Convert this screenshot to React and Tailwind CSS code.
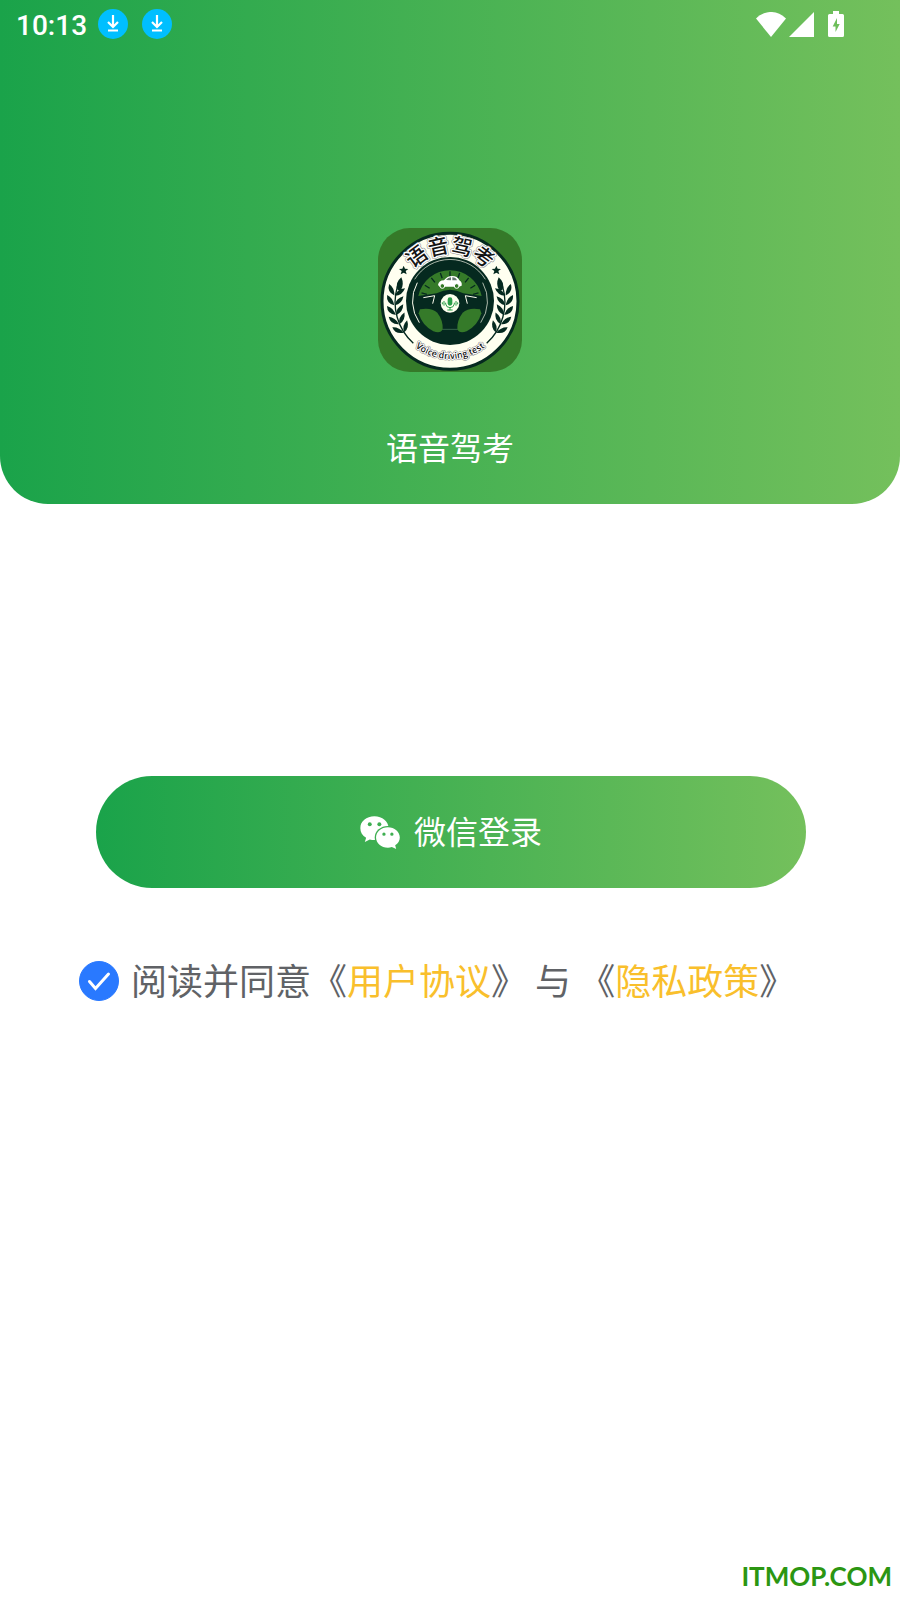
const DownloadBadge = () => (
  <svg viewBox="0 0 30 30" className="size-[30px]" aria-hidden="true">
    <circle cx="15" cy="15" r="15" fill="#00bfff" />
    <path d="M15 6v12M10 13l5 5 5-5M10 21.5h10" fill="none" stroke="#fff" strokeWidth="2.2" />
  </svg>
)

const WifiIcon = () => (
  <svg viewBox="0 0 30 25" className="h-[25px] w-[30px]" fill="#fff" aria-hidden="true">
    <path d="M0 6.5C9-2.200 21-2.200 30 6.500L15 25Z" />
  </svg>
)

const SignalIcon = () => (
  <svg viewBox="0 0 25 25" className="size-[25px]" fill="#fff" aria-hidden="true">
    <path d="M25 0v25H0Z" />
  </svg>
)

const BatteryIcon = () => (
  <svg viewBox="0 0 16 26" className="h-[26px] w-4" aria-hidden="true">
    <path
      fill="#fff"
      fillRule="evenodd"
      d="M5 0h6v3h3.500Q16 3 16 4.500v20Q16 26 14.500 26h-13Q0 26 0 24.500v-20Q0 3 1.500 3H5ZM9 7l-4.300 8.500h2.800V21l4.200-8H9Z"
    />
  </svg>
)

const WechatIcon = () => (
  <svg viewBox="0 0 120 100" className="h-[33px] w-10" aria-hidden="true">
    <mask id="bubble-gap">
      <rect width="120" height="100" fill="#fff" />
      <ellipse cx="84" cy="65" rx="40" ry="35" fill="#000" />
      <circle cx="29" cy="25" r="6" fill="#000" />
      <circle cx="58" cy="25" r="6" fill="#000" />
    </mask>
    <path
      mask="url(#bubble-gap)"
      fill="#fff"
      d="M43 1C19 1 0 17 0 37c0 12 7 22 18 29l-4 13 15-8c5 1 9 2 14 2 24 0 43-16 43-36S67 1 43 1Z"
    />
    <path
      fill="#fff"
      fillRule="evenodd"
      d="M84 34c-20 0-36 14-36 31s16 31 36 31c4 0 8-1 12-2l13 6-3-11c9-6 14-14 14-24 0-17-16-31-36-31ZM72 50a5 5 0 1 1 0 10 5 5 0 0 1 0-10Zm24 0a5 5 0 1 1 0 10 5 5 0 0 1 0-10Z"
    />
  </svg>
)

const LEAF_ANGLES = [11, 1, -9, -19, -29]
const RAY_ANGLES = [-74, -58, -39, -19, 0, 19, 39, 58, 74]

// One branch, drawn on the left of the badge around its centre
function Laurel() {
  return (
    <g fill="#05291f">
      <path d="M-158 -44A166 166 0 0 0 -110 126" fill="none" stroke="#05291f" strokeWidth="4" />
      <path d="M-157 -34q-10-20 11-38q9 20-1 38Z" />
      {LEAF_ANGLES.map((angle) => (
        <g key={angle} transform={`rotate(${angle}) translate(-166 4)`}>
          <path d="M-1 11Q-26 4-23-20Q-5-12-1 11Z" />
          <path d="M1 11Q2-10 26-17Q22 6 1 11Z" />
        </g>
      ))}
    </g>
  )
}

function AppLogo() {
  return (
    <svg
      viewBox="0 0 432 432"
      className="size-36 rounded-[32px] bg-[#357a29]"
      role="img"
      aria-label="语音驾考"
    >
      <defs>
        <path id="arc-top" d="M71 220A145 145 0 0 1 361 220" />
        <path id="arc-bottom" d="M44 221A172 172 0 0 0 388 221" />
      </defs>
      <circle cx="216" cy="220" r="204" fill="#fffff0" stroke="#05291f" strokeWidth="9" />

      {/* Wheel */}
      <circle cx="216" cy="219" r="132" fill="#05291f" />
      <path d="M124 284A113 113 0 0 1 118 164" fill="none" stroke="#fffff0" strokeWidth="3" />
      <path d="M110 154A124 124 0 0 1 322 154" fill="none" stroke="#fffff0" strokeWidth="2" />
      <path d="M314 164A113 113 0 0 1 308 284" fill="none" stroke="#fffff0" strokeWidth="2" />
      <path
        fill="#357a29"
        d="M121 204A97 97 0 0 1 311 204L256 196Q216 174 176 196Z"
      />
      <path
        fill="#357a29"
        d="M126 244Q160 238 178 254Q196 278 194 304Q188 318 166 310Q132 292 122 256Z"
      />
      <path
        fill="#357a29"
        d="M306 244Q272 238 254 254Q236 278 238 304Q244 318 266 310Q300 292 310 256Z"
      />
      <path d="M136 209l34-6-6 24M296 209l-34-6 6 24" fill="none" stroke="#fffff0" strokeWidth="3" />
      <path d="M194 304h44" stroke="#4f8460" strokeWidth="2" />
      <g transform="translate(216 219)" stroke="#05291f" strokeWidth="4">
        {RAY_ANGLES.map((angle) => (
          <path key={angle} d="M0-72V-89" transform={`rotate(${angle})`} />
        ))}
      </g>

      {/* Car */}
      <path
        fill="#fff"
        d="M180 171q2-14 18-14q10-13 24-13q17 0 22 13q9 5 7 16l-8 3h-58Z"
      />
      <path d="M204 156q6-8 15-8v9ZM223 148q11 0 14 9h-14Z" fill="#63766d" />
      <circle cx="193" cy="174" r="7" fill="#357a29" stroke="#fff" strokeWidth="3" />
      <circle cx="236" cy="174" r="7" fill="#357a29" stroke="#fff" strokeWidth="3" />

      {/* Microphone */}
      <circle cx="216" cy="226" r="28" fill="#fffff0" />
      <rect x="209" y="208" width="14" height="25" rx="7" fill="#2a9e47" />
      <path
        d="M203 224v4q2 11 13 11t13-11v-4M216 239v7M208 246h16M198 219v14M193 223v6M234 219v14M239 223v6"
        fill="none"
        stroke="#2a9e47"
        strokeWidth="3"
      />

      <g transform="translate(216 220)">
        <Laurel />
        <g transform="scale(-1 1)">
          <Laurel />
        </g>
      </g>

      <path d="M77 113l4 9 10 1-8 6 3 10-9-5-9 5 3-10-8-6 10-1Z" fill="#05291f" />
      <path d="M355 113l4 9 10 1-8 6 3 10-9-5-9 5 3-10-8-6 10-1Z" fill="#05291f" />

      <g fill="#151515" textAnchor="middle">
        <g
          strokeLinejoin="round"
          className="font-['Noto_Sans_CJK_SC',sans-serif] text-[62px] font-medium"
        >
          <text stroke="#8b8b8b" strokeWidth="11">
            <textPath href="#arc-top" startOffset="50%">语音驾考</textPath>
          </text>
          <text stroke="#fff" strokeWidth="8" className="[paint-order:stroke]">
            <textPath href="#arc-top" startOffset="50%">语音驾考</textPath>
          </text>
        </g>
        <g
          strokeLinejoin="round"
          className="font-['Open_Sans',sans-serif] text-[27px] font-semibold"
        >
          <text stroke="#8b8b8b" strokeWidth="9">
            <textPath href="#arc-bottom" startOffset="50%">Voice driving test</textPath>
          </text>
          <text stroke="#fff" strokeWidth="6" className="[paint-order:stroke]">
            <textPath href="#arc-bottom" startOffset="50%">Voice driving test</textPath>
          </text>
        </g>
      </g>
    </svg>
  )
}

export default function App() {
  return (
    <div className="flex min-h-screen flex-col bg-white font-['Noto_Sans_CJK_SC',sans-serif]">
      {/* Header */}
      <header className="flex flex-col items-center rounded-b-[48px] bg-linear-to-r/srgb from-[#1aa34a] to-[#74c05c] pb-[34px] text-white">
        <div className="flex h-12 w-full items-center pr-14 pl-4">
          <span className="pt-[3px] font-['Roboto',sans-serif] text-[28px] leading-8 font-medium">10:13</span>
          <div className="ml-[11px] flex gap-[14px]">
            <DownloadBadge />
            <DownloadBadge />
          </div>
          <div className="ml-auto flex items-center">
            <WifiIcon />
            <div className="ml-[3px]">
              <SignalIcon />
            </div>
            <div className="ml-[14px]">
              <BatteryIcon />
            </div>
          </div>
        </div>

        <div className="mt-[180px]">
          <AppLogo />
        </div>
        <h1 className="mt-[50px] text-[32px] leading-12">语音驾考</h1>
      </header>

      {/* Login */}
      <main className="pt-[272px]">
        <div className="pr-[94px] pl-24">
          <button
            type="button"
            className="flex h-28 w-full items-center justify-center gap-[14px] rounded-full bg-linear-to-r/srgb from-[#1aa34a] to-[#74c05c] text-[32px] text-white"
          >
            <WechatIcon />
            <span className="pb-1">微信登录</span>
          </button>
        </div>

        <div className="mt-[61px] flex items-center pl-[79px]">
          <span className="grid size-10 shrink-0">
            <input
              id="agree"
              type="checkbox"
              defaultChecked
              className="peer col-start-1 row-start-1 size-10 appearance-none rounded-full border border-[#c8c9cc] checked:border-[#2979ff] checked:bg-[#2979ff]"
            />
            <svg
              viewBox="0 0 40 40"
              className="pointer-events-none invisible col-start-1 row-start-1 peer-checked:visible"
              fill="none"
              aria-hidden="true"
            >
              <path d="M10.500 20.500l6 7L29.500 13" stroke="#fff" strokeWidth="3" strokeLinecap="round" />
            </svg>
          </span>
          <label
            htmlFor="agree"
            className="ml-3 pb-1 text-[36px] leading-[60px] whitespace-nowrap text-[#606266]"
          >
            阅读并同意《<a href="#terms" className="text-[#f9bf2c]">用户协议</a>》 与 《<a href="#privacy" className="text-[#f9bf2c]">隐私政策</a>》
          </label>
        </div>
      </main>

      <footer className="mt-auto pr-2 pb-1.5 text-right font-['Lato',sans-serif] text-[26px] leading-9 font-bold text-[#2b9612]">
        ITMOP.COM
      </footer>
    </div>
  )
}
